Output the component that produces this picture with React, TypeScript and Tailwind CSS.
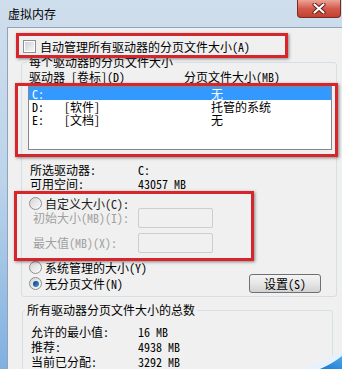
import React from "react";

function Radio({ checked }: { checked?: boolean }) {
  return (
    <span className="flex h-[13px] w-[13px] shrink-0 items-center justify-center rounded-full border border-[#8e8f8f] bg-gradient-to-br from-[#d6d6d6] to-[#fbfbfb]">
      {checked && (
        <span className="h-[6px] w-[6px] rounded-full bg-gradient-to-br from-[#0b3a78] to-[#4a9be0]" />
      )}
    </span>
  );
}

function ListRow({ a, b, c, sel }: { a: string; b: string; c: string; sel?: boolean }) {
  return (
    <div className={"flex h-[13px] items-center pl-[3px] leading-[13px] " + (sel ? "bg-[#3399ff] text-white" : "text-black")}>
      <span className="w-[32px] shrink-0">{a}</span>
      <span className="w-[147px] shrink-0">{b}</span>
      <span>{c}</span>
    </div>
  );
}

export default function App() {
  return (
    <div className="relative h-[369px] w-[342px] overflow-hidden bg-gradient-to-b from-[#cfdeec] via-[#bcd3ea] to-[#7fb0e0] font-['Noto_Sans_Mono_CJK_SC','Noto_Sans_CJK_SC',sans-serif] text-[12px] leading-[14px] text-black">
      {/* title bar */}
      <div className="flex h-[27px] items-start justify-between">
        <span className="mt-[7px] ml-[8px] text-[12px] leading-[14px] text-black">虚拟内存</span>
        <div className="mr-[1px] flex h-[18px] w-[44px] items-center justify-center rounded-b-[4px] border border-t-0 border-[#7b2b22] bg-gradient-to-b from-[#eba596] via-[#d35a4b] to-[#c2402f]">
          <svg width="14" height="11" viewBox="0 0 14 11">
            <path d="M2.5 1.5 L11.5 9.5 M11.5 1.5 L2.5 9.5" stroke="#5a1a12" strokeWidth="4" strokeLinecap="round" />
            <path d="M2.5 1.5 L11.5 9.5 M11.5 1.5 L2.5 9.5" stroke="#ffffff" strokeWidth="2.2" strokeLinecap="round" />
          </svg>
        </div>
      </div>

      <div className="flex h-[342px]">
        <div className="w-[7px] shrink-0" />
        <div className="flex-1 border-l border-t border-[#8fa4ba] bg-[#f0f0f0]">
          {/* auto manage checkbox */}
          <div className="mt-[12px] ml-[15px] flex h-[13px] items-center gap-[4px]">
            <span className="flex h-[13px] w-[13px] items-center justify-center border border-[#8e8f8f] bg-white">
              <span className="h-[9px] w-[9px] bg-gradient-to-br from-[#cfd3d8] to-[#f7f7f7]" />
            </span>
            <span>自动管理所有驱动器的分页文件大小(A)</span>
          </div>

          {/* upper group */}
          <fieldset className="mt-[2px] ml-[13px] w-[316px] rounded-[3px] border border-[#d5dfe5] pr-[3px] pb-[3px] pl-[5px]">
            <legend className="px-[2px] leading-[14px]">每个驱动器的分页文件大小</legend>
            <div className="mt-[1px] ml-[2px] flex h-[14px]">
              <span className="w-[155px] shrink-0">驱动器 [卷标](D)</span>
              <span>分页文件大小(MB)</span>
            </div>
            <div className="mt-[2px] ml-[1px] h-[64px] w-[304px] border border-[#828790] bg-white">
              <ListRow a="C:" b="" c="无" sel />
              <ListRow a="D:" b="[软件]" c="托管的系统" />
              <ListRow a="E:" b="[文档]" c="无" />
            </div>
            <div className="mt-[13px] ml-[3px] flex h-[14px]">
              <span className="w-[108px] shrink-0">所选驱动器:</span>
              <span>C:</span>
            </div>
            <div className="ml-[3px] flex h-[14px]">
              <span className="w-[108px] shrink-0">可用空间:</span>
              <span>43057 MB</span>
            </div>
            <div className="mt-[6px] ml-[2px] flex h-[13px] items-center gap-[3px]">
              <Radio />
              <span className="text-[#202020]">自定义大小(C):</span>
            </div>
            <div className="mt-[-2px] ml-[6px] flex h-[20px] items-center">
              <span className="w-[105px] shrink-0 text-[#a0a0a0]">初始大小(MB)(I):</span>
              <span className="h-[20px] w-[75px] rounded-[2px] border border-[#cdcdcd] bg-[#f0f0f0]" />
            </div>
            <div className="mt-[5px] ml-[6px] flex h-[20px] items-center">
              <span className="w-[105px] shrink-0 text-[#a0a0a0]">最大值(MB)(X):</span>
              <span className="h-[20px] w-[75px] rounded-[2px] border border-[#cdcdcd] bg-[#f0f0f0]" />
            </div>
            <div className="mt-[8px] ml-[2px] flex h-[13px] items-center gap-[3px]">
              <Radio />
              <span>系统管理的大小(Y)</span>
            </div>
            <div className="flex h-[19px] w-[304px] items-center justify-between">
              <div className="ml-[2px] flex items-center gap-[3px]">
                <Radio checked />
                <span>无分页文件(N)</span>
              </div>
              <button className="mr-[10px] flex h-[19px] w-[72px] items-center justify-center rounded-[3px] border border-[#707070] bg-gradient-to-b from-[#f4f4f4] via-[#e6e6e6] to-[#d2d2d2] text-[12px] leading-[14px] text-black">
                设置(S)
              </button>
            </div>
          </fieldset>

          {/* lower group */}
          <fieldset className="mt-[6px] ml-[14px] h-[90px] w-[311px] rounded-[3px] border border-[#d5dfe5] pl-[2px]">
            <legend className="px-[2px] leading-[14px]">所有驱动器分页文件大小的总数</legend>
            <div className="mt-[7px] ml-[6px] flex h-[15px] items-center">
              <span className="w-[107px] shrink-0">允许的最小值:</span>
              <span>16 MB</span>
            </div>
            <div className="ml-[6px] flex h-[15px] items-center">
              <span className="w-[107px] shrink-0">推荐:</span>
              <span>4938 MB</span>
            </div>
            <div className="ml-[6px] flex h-[15px] items-center">
              <span className="w-[107px] shrink-0">当前已分配:</span>
              <span>3292 MB</span>
            </div>
          </fieldset>
        </div>
      </div>

      {/* bottom-right swoosh */}
      <svg className="absolute right-0 bottom-0" width="52" height="26" viewBox="0 0 52 26">
        <defs>
          <linearGradient id="sw" x1="0" y1="1" x2="1" y2="0">
            <stop offset="0" stopColor="#1c78cf" />
            <stop offset="1" stopColor="#4aa8ec" />
          </linearGradient>
        </defs>
        <path d="M12 26 Q34 19 52 6 L52 26 Z" fill="#e6f1fb" />
        <path d="M30 26 Q42 21 52 13 L52 26 Z" fill="url(#sw)" />
      </svg>

      {/* red annotation boxes */}
      <div className="absolute top-[33px] left-[16px] h-[25px] w-[272px] border-[3px] border-[#d6262b] shadow-[1px_1px_3px_rgba(0,0,0,0.45)]" />
      <div className="absolute top-[83px] left-[15px] h-[74px] w-[323px] border-[3px] border-[#d6262b] shadow-[1px_1px_3px_rgba(0,0,0,0.45)]" />
      <div className="absolute top-[191px] left-[14px] h-[70px] w-[240px] border-[3px] border-[#d6262b] shadow-[1px_1px_3px_rgba(0,0,0,0.45)]" />
    </div>
  );
}
